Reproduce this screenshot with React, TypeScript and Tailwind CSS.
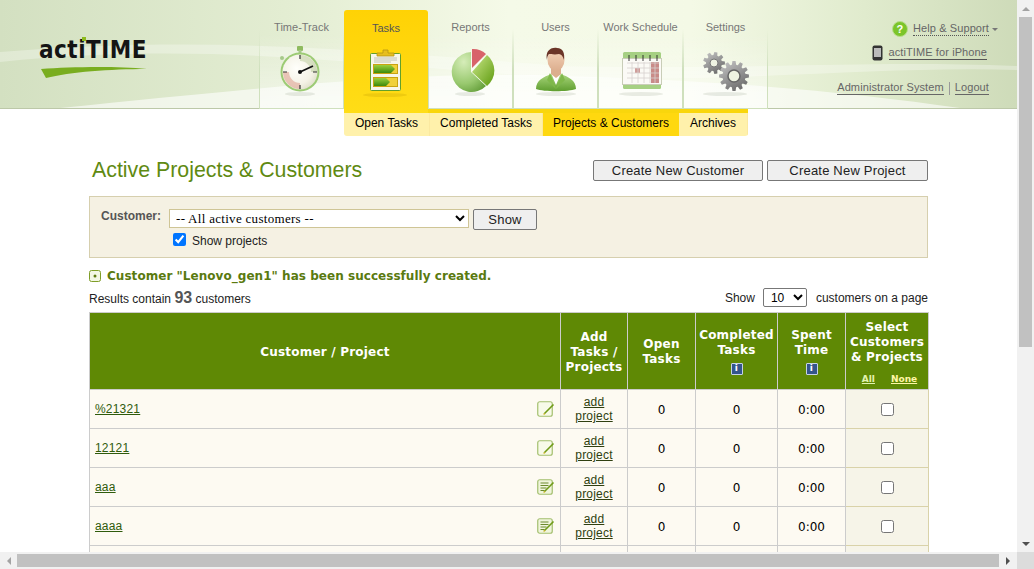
const verdana = "font-['DejaVu_Sans',sans-serif]";

function gearPath(cx: number, cy: number, outer: number, inner: number, teeth: number) {
  const pts: string[] = [];
  const step = (Math.PI * 2) / teeth;
  for (let i = 0; i < teeth; i++) {
    const a = i * step;
    const spots: [number, number][] = [
      [inner, a - step * 0.36],
      [outer, a - step * 0.2],
      [outer, a + step * 0.2],
      [inner, a + step * 0.36],
    ];
    spots.forEach(([r, t]) => pts.push(`${(cx + r * Math.cos(t)).toFixed(2)},${(cy + r * Math.sin(t)).toFixed(2)}`));
  }
  return `M${pts.join('L')}Z`;
}

function IconShadow({ cx, w }: { cx: number; w: number }) {
  return <ellipse cx={cx} cy={52} rx={w} ry={2} fill="#6c7a5a" opacity={0.14} />;
}

function StopwatchIcon() {
  return (
    <svg width="85" height="60" viewBox="0 0 85 60">
      <defs>
        <radialGradient id="sw" cx="0.4" cy="0.4" r="0.7">
          <stop offset="0" stopColor="#fffffb" />
          <stop offset="0.65" stopColor="#f4f2e6" />
          <stop offset="1" stopColor="#dcdcc6" />
        </radialGradient>
      </defs>
      <IconShadow cx={41} w={15} />
      <rect x="38" y="4" width="6" height="5" rx="1" fill="#8fbb5f" />
      <rect x="39.500" y="8" width="3" height="3" fill="#a6c88a" />
      <circle cx="23" cy="16" r="2" fill="#a6c98a" />
      <circle cx="41" cy="30" r="19.500" fill="#9ccb74" />
      <circle cx="41" cy="30" r="17.500" fill="url(#sw)" />
      <path d="M27 30a14 14 0 0 0 14 14" fill="none" stroke="#e3b3a4" strokeWidth="6" opacity={0.75} />
      <path d="M41 16a14 14 0 0 1 14 14" fill="none" stroke="#b9cc9c" strokeWidth="6" opacity={0.5} />
      <path d="M41 13v4M41 43v4M24 30h4M54 30h4" stroke="#333" strokeWidth="1.200" />
      <path d="M41 30L54 24" stroke="#111" strokeWidth="1.800" />
      <circle cx="41" cy="30" r="2" fill="#111" />
    </svg>
  );
}

function TasksIcon() {
  return (
    <svg width="84" height="60" viewBox="0 0 84 60">
      <defs>
        <linearGradient id="arrow" x1="0" y1="0" x2="0" y2="1">
          <stop offset="0" stopColor="#9bcf3c" />
          <stop offset="1" stopColor="#3d8a0c" />
        </linearGradient>
      </defs>
      <ellipse cx="41" cy="53" rx="22" ry="2" fill="#b59200" opacity={0.22} />
      <rect x="26.500" y="11.500" width="30" height="37" rx="1" fill="#f7f6ea" stroke="#63a02c" />
      <path d="M33 14v-3h6V8h5v3h6v3Z" fill="#e7be1e" stroke="#b69415" strokeWidth="0.800" />
      <path d="M30 16h23M30 18h23M30 20h17" stroke="#b5b5a8" strokeWidth="0.800" />
      <rect x="29.500" y="22.500" width="24" height="9" fill="#f0d03a" stroke="#c9a310" />
      <path d="M30 23h17l4 4-4 4H30Z" fill="url(#arrow)" />
      <rect x="29.500" y="35.500" width="24" height="9" fill="#f0d03a" stroke="#c9a310" />
      <path d="M30 36h12l4 4-4 4H30Z" fill="url(#arrow)" />
    </svg>
  );
}

function PieIcon() {
  return (
    <svg width="85" height="60" viewBox="0 0 85 60">
      <defs>
        <radialGradient id="pieA" cx="0.35" cy="0.25" r="0.9">
          <stop offset="0" stopColor="#d6edb9" />
          <stop offset="0.6" stopColor="#99c96f" />
          <stop offset="1" stopColor="#5f9a35" />
        </radialGradient>
        <linearGradient id="pieB" x1="0" y1="0" x2="1" y2="1">
          <stop offset="0" stopColor="#cce88a" />
          <stop offset="1" stopColor="#5d9a0e" />
        </linearGradient>
      </defs>
      <IconShadow cx={42} w={15} />
      <path d="M43 30V10A20 20 0 1 0 58 44Z" fill="url(#pieA)" />
      <path d="M44 30L59 13A20 20 0 0 1 59 44Z" fill="url(#pieB)" />
      <path d="M44 26V7A19 19 0 0 1 58 12Z" fill="#d8636a" />
    </svg>
  );
}

function UserIcon() {
  return (
    <svg width="85" height="60" viewBox="0 0 85 60">
      <defs>
        <linearGradient id="suit" x1="0" y1="0" x2="0" y2="1">
          <stop offset="0" stopColor="#a9d67c" />
          <stop offset="1" stopColor="#5f9e2f" />
        </linearGradient>
        <linearGradient id="skin" x1="0" y1="0" x2="0" y2="1">
          <stop offset="0" stopColor="#f5d4ba" />
          <stop offset="1" stopColor="#dcae8e" />
        </linearGradient>
      </defs>
      <IconShadow cx={43} w={20} />
      <path d="M23 47c0-9 8-12 15-15h10c7 3 15 6 15 15-8 3-32 3-40 0Z" fill="url(#suit)" />
      <path d="M38 31l5 12 5-12-5 3Z" fill="#fff" />
      <path d="M37 31l6 16-9-9ZM49 31l-6 16 9-9Z" fill="#7fb84a" />
      <path d="M38 24h10v8l-5 4-5-4Z" fill="#dcae8e" />
      <ellipse cx="43" cy="18" rx="8.500" ry="11" fill="url(#skin)" />
      <path d="M34 18c-2-8 3-13 10-12 6 0 8 5 7 12-1-4-3-6-5-6-4 1-9 0-10 0-1 1-2 3-2 6Z" fill="#6b3528" />
    </svg>
  );
}

function CalendarIcon() {
  const xs = [31, 38, 45, 52, 59];
  return (
    <svg width="85" height="60" viewBox="0 0 85 60">
      <IconShadow cx={43} w={22} />
      <rect x="25" y="10" width="38" height="37" rx="1.500" fill="#a6d083" />
      <rect x="24.500" y="16.500" width="39" height="26" fill="#fbfaf6" stroke="#c9cdb8" />
      <rect x="53" y="20" width="8" height="21" fill="#c98b88" />
      <rect x="37" y="26" width="5" height="5" fill="#cf9c99" />
      <path d="M29 21h32M29 26h32M29 31h32M29 36h32M34 20v21M40 20v21M46 20v21M52 20v21M57 20v21" stroke="#d8d0cf" strokeWidth="0.800" />
      {xs.map((x) => (
        <path key={x} d={`M${x} 13v6`} stroke="#222" strokeWidth="0.900" />
      ))}
    </svg>
  );
}

function GearsIcon() {
  return (
    <svg width="85" height="60" viewBox="0 0 85 60">
      <defs>
        <linearGradient id="gear" x1="0" y1="0" x2="0.6" y2="1">
          <stop offset="0" stopColor="#c9c9c9" />
          <stop offset="1" stopColor="#6f6f6f" />
        </linearGradient>
      </defs>
      <IconShadow cx={42} w={22} />
      <path d={gearPath(31, 21, 11, 8, 9)} fill="url(#gear)" />
      <circle cx="31" cy="21" r="4" fill="#eef3e2" stroke="#777" />
      <path d={gearPath(51, 34, 15, 11.500, 12)} fill="url(#gear)" />
      <circle cx="51" cy="34" r="6" fill="#eef3e2" stroke="#666" strokeWidth="1.500" />
    </svg>
  );
}

const tabs = [
  { name: 'Time-Track', icon: <StopwatchIcon /> },
  { name: 'Tasks', icon: <TasksIcon />, active: true },
  { name: 'Reports', icon: <PieIcon /> },
  { name: 'Users', icon: <UserIcon /> },
  { name: 'Work Schedule', icon: <CalendarIcon /> },
  { name: 'Settings', icon: <GearsIcon /> },
];

function NavTab({ name, icon, active }: { name: string; icon: React.ReactNode; active?: boolean }) {
  if (active) {
    return (
      <div className="relative z-10 flex h-[103px] w-[84px] shrink-0 flex-col items-center rounded-t-[3px] bg-[linear-gradient(#ffd205,#ffdd17)] pt-[10px] text-[11px] text-[#555]">
        <span className="h-[22px]">{name}</span>
        <div className="h-[60px]">{icon}</div>
      </div>
    );
  }
  return (
    <div className="flex h-[99px] w-[85px] shrink-0 flex-col items-center border-x border-b border-b-[#bcc8a8] bg-[linear-gradient(transparent_25%,rgba(255,255,255,0.5))] pt-[9px] text-[11px] text-[#777] [border-image:linear-gradient(transparent_20%,#cfe0bd_60%)_1]">
      <span className="h-[23px] whitespace-nowrap">{name}</span>
      <div className="h-[60px]">{icon}</div>
    </div>
  );
}

function Logo() {
  return (
    <div className="relative ml-[39px] mt-[33px] h-[46px] w-[112px]">
      <span className="block text-[24px] leading-[34px] font-bold tracking-[0.5px] text-[#141414] font-['DejaVu_Sans_Condensed','DejaVu_Sans',sans-serif]">
        actiTIME
      </span>
      <span className="absolute left-[43px] top-[4px] h-[4px] w-[4px] bg-[#8dbb1e]" />
      <svg className="absolute left-[1px] top-[34px]" width="108" height="12" viewBox="0 0 108 12">
        <path d="M1 2C30 0 75-1 107 2 70 2 30 5 6 11Z" fill="#79ad1f" />
      </svg>
    </div>
  );
}

function TopLinks() {
  return (
    <div className="flex flex-1 flex-col items-end pr-[19px] pt-[21px] text-[11px] tracking-[0.1px] text-[#666]">
      <div className="flex items-center">
        <svg width="16" height="16" viewBox="0 0 16 16" className="mr-[5px]">
          <circle cx="8" cy="8" r="7.500" fill="#7cc52a" stroke="#b7dc8b" />
          <text x="8" y="12" textAnchor="middle" fontSize="11" fontWeight="700" fill="#fff" fontFamily="Liberation Sans">?</text>
        </svg>
        <span className="border-b border-dotted border-[#555] leading-[13px]">Help &amp; Support</span>
        <span className="ml-[3px] h-0 w-0 border-x-[3px] border-t-[3px] border-x-transparent border-t-[#777]" />
      </div>
      <div className="mr-[11px] mt-[8px] flex items-center">
        <svg width="11" height="16" viewBox="0 0 11 16" className="mr-[6px]">
          <rect x="0.500" y="0.500" width="10" height="15" rx="2" fill="#333" />
          <rect x="2" y="3" width="7" height="9" fill="#bbb" />
        </svg>
        <span className="border-b border-[#555] leading-[13px]">actiTIME for iPhone</span>
      </div>
      <div className="mr-[9px] mt-[20px] flex items-center">
        <span className="border-b border-[#666] leading-[13px]">Administrator System</span>
        <span className="mx-[5px] h-[13px] w-px bg-[#999]" />
        <span className="border-b border-[#666] leading-[13px]">Logout</span>
      </div>
    </div>
  );
}

function Header() {
  return (
    <div className="relative h-[109px] border-b border-[#bcc8a8] bg-[linear-gradient(90deg,#d3e0c1,#e3edd2_28%,#f5fae8_50%,#f4f9e6_68%,#e0ebcd_85%,#cedbb9)]">
      <svg className="absolute inset-0" width="1017" height="108" viewBox="0 0 1017 108">
        <path d="M0 62C200 42 330 62 560 78 760 82 880 66 1017 70V66C860 60 760 70 560 66 340 48 200 36 0 52Z" fill="#fff" opacity={0.3} />
        <path d="M60 108C260 88 420 70 560 76 720 80 850 92 960 108Z" fill="#fff" opacity={0.6} />
      </svg>
      <div className="relative flex h-full items-start">
        <div className="w-[259px] shrink-0">
          <Logo />
        </div>
        <div className="flex pt-[10px]">
          {tabs.map((t) => (
            <NavTab key={t.name} name={t.name} icon={t.icon} active={t.active} />
          ))}
        </div>
        <TopLinks />
      </div>
    </div>
  );
}

const subItems = [
  { label: 'Open Tasks', w: 'w-[86px]' },
  { label: 'Completed Tasks', w: 'w-[113px]' },
  { label: 'Projects & Customers', w: 'w-[136px]', active: true },
  { label: 'Archives', w: 'w-[69px]' },
];

function SubNav() {
  return (
    <div className="ml-[344px] flex h-[27px] w-[404px] flex-col">
      <div className="ml-[84px] h-[4px] bg-[#f9d60c]" />
      <div className="flex h-[23px] overflow-hidden rounded-b-[3px] text-xs text-black">
        {subItems.map((s) => (
          <div
            key={s.label}
            className={
              s.w + ' flex items-center justify-center pb-[3px] ' + (s.active ? 'bg-[#ffd80f]' : 'border-r border-[#fbe9a0] bg-[#fff1ab]')
            }
          >
            {s.label}
          </div>
        ))}
      </div>
    </div>
  );
}

function FormBox() {
  return (
    <div className="mt-[15px] h-[62px] border border-[#d6cfae] bg-[#f5f1e3] pl-[11px] pt-[12px]">
      <div className="flex items-start">
        <span className="w-[68px] text-xs leading-[14px] font-bold text-[#555]">Customer:</span>
        <select className="h-[19px] w-[300px] border border-[#cfc596] bg-white pl-[2px] text-[13px] tracking-[0.3px] text-black font-['Liberation_Serif',serif]">
          <option>-- All active customers --</option>
        </select>
        <button className="ml-[4px] h-[21px] w-[64px] rounded-[2px] border border-[#777] bg-[#efefef] text-[13px] tracking-[0.2px] text-[#222]">Show</button>
      </div>
      <div className="ml-[72px] flex items-center text-xs text-[#222]">
        <input type="checkbox" defaultChecked className="m-0 h-[13px] w-[13px]" />
        <span className="ml-[6px] mt-[3px]">Show projects</span>
      </div>
    </div>
  );
}

function InfoBadge() {
  return (
    <span className={'mx-auto mt-[5px] flex h-[12px] w-[12px] items-center justify-center rounded-[1px] border border-[#c5d2e6] bg-[#34558b] text-[9px] leading-none font-bold text-white ' + verdana}>
      i
    </span>
  );
}

function NoteIcon({ filled }: { filled?: boolean }) {
  return (
    <svg width="18" height="18" viewBox="0 0 18 18">
      <rect x="0.750" y="1.750" width="14.500" height="14.500" rx="2" fill={filled ? '#f0f5dc' : '#f7fae8'} stroke="#a3bf6e" strokeWidth="1.200" />
      {filled && <path d="M3.500 5h8M3.500 7.500h8M3.500 10h6M3.500 12.500h4" stroke="#6d8a2e" strokeWidth="1" />}
      <path d="M7 14L16.500 4.500" stroke="#6f9a18" strokeWidth="1.600" />
      <path d="M6 15l1.500-2 1 1Z" fill="#e8b923" />
    </svg>
  );
}

const rows = [
  { name: '%21321', filled: false },
  { name: '12121', filled: false },
  { name: 'aaa', filled: true },
  { name: 'aaaa', filled: true },
  { name: 'abc', filled: false },
];

function TableHead() {
  const th = 'border border-[#ccc] px-0 pt-[2px] text-center align-middle text-xs leading-[15px] tracking-[0.2px] font-bold text-white ' + verdana;
  return (
    <thead>
      <tr className="h-[77px] bg-[#5f8905]">
        <th className={th}>Customer / Project</th>
        <th className={th}>
          Add
          <br />
          Tasks /
          <br />
          Projects
        </th>
        <th className={th}>
          Open
          <br />
          Tasks
        </th>
        <th className={th + ' pb-[2px]'}>
          Completed
          <br />
          Tasks
          <InfoBadge />
        </th>
        <th className={th + ' pb-[2px]'}>
          Spent
          <br />
          Time
          <InfoBadge />
        </th>
        <th className={th}>
          Select
          <br />
          Customers
          <br />
          &amp; Projects
          <div className="ml-[5px] mt-[9px] flex justify-center gap-[16px] text-[9px] leading-[11px] tracking-normal">
            <span className="text-[#e2f3b0] underline">All</span>
            <span className="text-[#fff7a5] underline">None</span>
          </div>
        </th>
      </tr>
    </thead>
  );
}

function CustomersTable() {
  const td = 'border border-[#ccc] pt-[2px] text-center align-middle text-xs text-black ' + verdana;
  return (
    <table className="w-[839px] table-fixed border-collapse">
      <colgroup>
        <col className="w-[471px]" />
        <col className="w-[67px]" />
        <col className="w-[68px]" />
        <col className="w-[82px]" />
        <col className="w-[68px]" />
        <col className="w-[83px]" />
      </colgroup>
      <TableHead />
      <tbody>
        {rows.map((r) => (
          <tr key={r.name} className="h-[39px] bg-[#fdfaf2]">
            <td className="border border-[#ccc] px-[5px] align-middle text-xs tracking-[0.2px] text-[#2f5b0c]">
              <div className="flex items-center justify-between">
                <span className="underline">{r.name}</span>
                <NoteIcon filled={r.filled} />
              </div>
            </td>
            <td className="border border-[#ccc] text-center align-middle text-xs leading-[14px] tracking-[0.2px] text-[#2f3f10] underline">
              add
              <br />
              project
            </td>
            <td className={td}>0</td>
            <td className={td}>0</td>
            <td className={td}>0:00</td>
            <td className="border border-[#d9d2a9] bg-[#f6f4e8] text-center align-middle">
              <input type="checkbox" className="m-0 h-[13px] w-[13px] align-middle" />
            </td>
          </tr>
        ))}
      </tbody>
    </table>
  );
}

function Content() {
  return (
    <div className="pl-[89px] pr-[89px] pt-[24px]">
      <div className="flex items-start justify-between">
        <h1 className="pl-[3px] text-[21.33px] leading-[21px] text-[#5f8a12]">Active Projects &amp; Customers</h1>
        <div className="flex gap-[4px]">
          <button className="h-[21px] w-[170px] rounded-[2px] border border-[#777] bg-[#efefef] pb-[1px] text-[13px] tracking-[0.2px] text-[#222]">Create New Customer</button>
          <button className="h-[21px] w-[161px] rounded-[2px] border border-[#777] bg-[#efefef] pb-[1px] text-[13px] tracking-[0.2px] text-[#222]">Create New Project</button>
        </div>
      </div>
      <FormBox />
      <div className="mt-[10px] flex items-center">
        <svg width="12" height="12" viewBox="0 0 12 12">
          <rect x="0.500" y="0.500" width="11" height="11" rx="2" fill="#f3f7e4" stroke="#7f9d27" />
          <circle cx="6" cy="6" r="1.500" fill="#5f7c10" />
        </svg>
        <span className={'ml-[6px] text-xs leading-[16px] tracking-[0.04px] font-bold text-[#5a7a10] ' + verdana}>
          Customer &quot;Lenovo_gen1&quot; has been successfully created.
        </span>
      </div>
      <div className="mt-[3px] flex h-[25px] items-center justify-between pb-[4px] text-xs text-[#222]">
        <div>
          Results contain <span className="text-base font-bold text-[#555]">93</span> customers
        </div>
        <div className="flex items-center">
          <span>Show</span>
          <select className="ml-[8px] mr-[9px] h-[19px] w-[44px] rounded-[2px] border border-[#777] bg-white pl-[3px] text-xs text-black">
            <option>10</option>
          </select>
          <span>customers on a page</span>
        </div>
      </div>
      <CustomersTable />
    </div>
  );
}

function VScroll() {
  return (
    <div className="flex w-[17px] shrink-0 flex-col items-center bg-[#f1f1f1]">
      <div className="flex h-[17px] items-center">
        <span className="h-0 w-0 border-x-[4px] border-b-[4px] border-x-transparent border-b-[#a3a3a3]" />
      </div>
      <div className="h-[330px] w-[13px] bg-[#c1c1c1]" />
      <div className="flex-1" />
      <div className="flex h-[17px] items-center">
        <span className="h-0 w-0 border-x-[4px] border-t-[4px] border-x-transparent border-t-[#505050]" />
      </div>
    </div>
  );
}

function HScroll() {
  return (
    <div className="flex h-[17px] shrink-0 items-center bg-[#f1f1f1]">
      <div className="flex h-full w-[17px] items-center justify-center">
        <span className="h-0 w-0 border-y-[4px] border-r-[4px] border-y-transparent border-r-[#a3a3a3]" />
      </div>
      <div className="h-[13px] w-[982px] bg-[#c1c1c1]" />
      <div className="flex h-full w-[18px] items-center justify-center">
        <span className="h-0 w-0 border-y-[4px] border-l-[4px] border-y-transparent border-l-[#505050]" />
      </div>
      <div className="h-full flex-1 bg-[#dcdcdc]" />
    </div>
  );
}

export default function App() {
  return (
    <div className="flex h-[569px] w-[1034px] flex-col overflow-hidden bg-white font-['Liberation_Sans',Arial,sans-serif]">
      <div className="flex min-h-0 flex-1">
        <div className="w-[1017px] overflow-hidden">
          <Header />
          <SubNav />
          <Content />
        </div>
        <VScroll />
      </div>
      <HScroll />
    </div>
  );
}
